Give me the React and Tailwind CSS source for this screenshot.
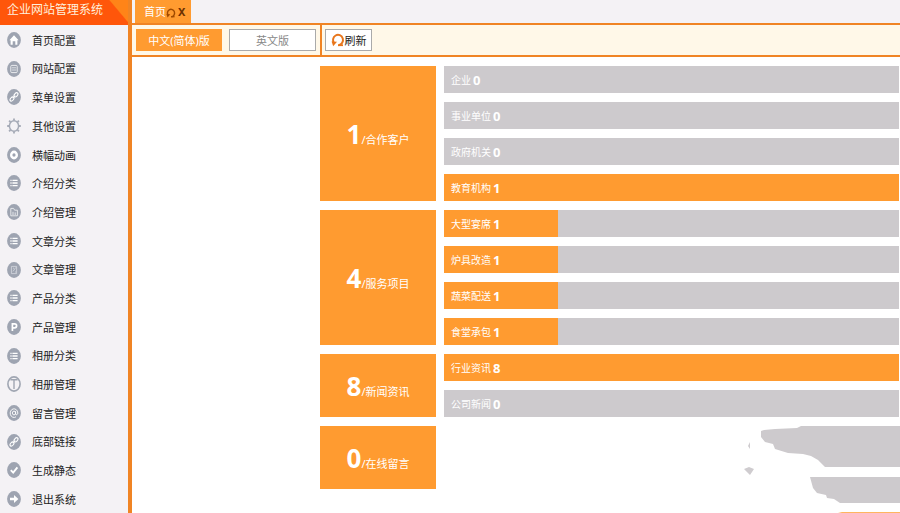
import React from "react";

const GLYPHS = {
  home: <path d="M2.4 8.2 7 3.2 11.6 8.2H10.4v4.6H8.3V9.2H5.7v3.6H3.6V8.2z" fill="#fff" />,
  site: (
    <g fill="none" stroke="#e9ebee">
      <rect x="3.8" y="4.4" width="6.4" height="7.2" rx="1" />
      <path d="M5 6.8h4M5 9h4" strokeWidth=".8" />
    </g>
  ),
  link: (
    <g fill="none" stroke="#fff" strokeWidth="1.1">
      <ellipse cx="5" cy="10" rx="1.5" ry="2.4" transform="rotate(42 5 10)" />
      <ellipse cx="9" cy="5.8" rx="1.5" ry="2.4" transform="rotate(42 9 5.8)" />
      <path d="M5.7 9.2 8.3 6.6" />
    </g>
  ),
  camera: (
    <g>
      <ellipse cx="7" cy="8" rx="4" ry="4.4" fill="#fff" />
      <ellipse cx="7" cy="8" rx="1.6" ry="1.7" fill="#9ea4b1" />
    </g>
  ),
  list: (
    <path
      d="M3.4 5.4h1.2M5.4 5.4h5.2M3.4 8h1.2M5.4 8h5.2M3.4 10.6h1.2M5.4 10.6h5.2"
      stroke="#fff"
      strokeWidth="1.3"
    />
  ),
  folder: (
    <path d="M3.8 11.8V4.4h2.8l1 1.8H10.4v5.6zM6 11V7.8M8.2 11V8.4" fill="none" stroke="#eceef1" strokeWidth=".9" />
  ),
  doc: (
    <path d="M4.4 4.4h5.2v7.2H4.4zM8.8 5.4 6 9.4M6 6.2h1M8 10h1" fill="none" stroke="#d5d9df" strokeWidth=".8" />
  ),
  product: (
    <path d="M5.4 12V4.8h2.2a1.9 1.9 0 0 1 0 4H5.4" fill="none" stroke="#fff" strokeWidth="1.7" />
  ),
  at: (
    <g fill="none" stroke="#fff" strokeWidth=".9">
      <ellipse cx="7" cy="8" rx="1.6" ry="1.9" />
      <path d="M8.6 6.2v2.6c0 1.5 2.2 1.2 2.2-.8A3.8 4.3 0 1 0 9 11.8" />
    </g>
  ),
  check: <path d="M3.8 8.2 6.2 10.6 10.4 5.4" fill="none" stroke="#fff" strokeWidth="1.9" />,
  exit: <path d="M3 6.7h4V4L11.4 8 7 12V9.3H3z" fill="#fff" />,
};

function MenuIcon({ name }) {
  return (
    <svg viewBox="0 0 14 16" className="h-4 w-3.5 shrink-0" aria-hidden="true">
      {name === "gear" && (
        <g fill="none" stroke="#a6abb7">
          <ellipse cx="7" cy="8" rx="4.6" ry="5.3" strokeWidth="1.5" />
          <path
            d="M7 .6v2M7 13.4v2M.2 8h2M11.8 8h2M2.1 2.6l1.4 1.5M11.9 2.6l-1.4 1.5M2.1 13.4l1.4-1.5M11.9 13.4l-1.4-1.5"
            strokeWidth="1.8"
          />
        </g>
      )}
      {name === "book" && (
        <g fill="none" stroke="#a0a6b2">
          <ellipse cx="7" cy="8" rx="6.1" ry="7.1" strokeWidth="1.6" />
          <path d="M7 3.4v9.6M3.4 3.8h7.2" strokeWidth="1.4" />
        </g>
      )}
      {GLYPHS[name] && <ellipse cx="7" cy="8" rx="6.9" ry="7.9" fill="#9ea4b1" />}
      {GLYPHS[name]}
    </svg>
  );
}

const MENU = [
  ["home", "首页配置"],
  ["site", "网站配置"],
  ["link", "菜单设置"],
  ["gear", "其他设置"],
  ["camera", "横幅动画"],
  ["list", "介绍分类"],
  ["folder", "介绍管理"],
  ["list", "文章分类"],
  ["doc", "文章管理"],
  ["list", "产品分类"],
  ["product", "产品管理"],
  ["list", "相册分类"],
  ["book", "相册管理"],
  ["at", "留言管理"],
  ["link", "底部链接"],
  ["check", "生成静态"],
  ["exit", "退出系统"],
];

const GROUPS = [
  {
    total: 1,
    name: "合作客户",
    bars: [
      ["企业", 0, 0],
      ["事业单位", 0, 0],
      ["政府机关", 0, 0],
      ["教育机构", 1, 100],
    ],
  },
  {
    total: 4,
    name: "服务项目",
    bars: [
      ["大型宴席", 1, 25],
      ["炉具改造", 1, 25],
      ["蔬菜配送", 1, 25],
      ["食堂承包", 1, 25],
    ],
  },
  {
    total: 8,
    name: "新闻资讯",
    bars: [
      ["行业资讯", 8, 100],
      ["公司新闻", 0, 0],
    ],
  },
];

function Refresh({ className }) {
  return (
    <svg viewBox="0 0 14 14" className={className} fill="none" stroke="currentColor" aria-hidden="true">
      <path d="M3.2 10.4A5 5.2 0 1 1 7.6 12.2" strokeWidth="2" />
      <path d="M.6 8.4 6 8.8 2.2 13.2z" fill="currentColor" stroke="none" />
      <path d="M7 12.2H12" strokeWidth="1.8" />
    </svg>
  );
}

function Total({ value, name }) {
  return (
    <div className="flex min-h-[63px] w-[116px] shrink-0 items-center justify-center bg-[#ff9b30] text-white">
      <div className="flex items-baseline">
        <strong className="text-[26px] leading-8 font-bold">{value}</strong>
        <span className="text-[11px]">/{name}</span>
      </div>
    </div>
  );
}

function Bar({ label, count, percent }) {
  return (
    <li className="grid h-[27px] items-center bg-[#cdcacd]">
      <div className="col-start-1 row-start-1 h-full bg-[#ff9b30]" style={{ width: `${percent}%` }} />
      <div className="col-start-1 row-start-1 flex items-center gap-0.5 px-[7px] text-white">
        <span className="text-[10px] leading-4">{label}</span>
        <strong className="text-[13px] leading-4 font-bold">{count}</strong>
      </div>
    </li>
  );
}

export default function App() {
  return (
    <div className="flex min-h-screen bg-white font-['Noto_Sans','Noto_Sans_CJK_SC',sans-serif] text-[11px] text-[#222]">
      <aside className="flex w-[132px] shrink-0 flex-col border-r-4 border-[#f08424] bg-[#f4f2f5]">
        <h1 className="flex h-[25px] items-start bg-linear-[50deg,#ff560a_0%,#ff560a_87%,#ff8418_88%] pl-[7px] text-[12px] leading-5 text-[#fff0dc]">
          企业网站管理系统
        </h1>
        <nav className="flex grow pt-px">
          <ul className="flex grow flex-col justify-between">
            {MENU.map(([icon, label]) => (
              <li key={label}>
                <a href="#" className="flex h-7 items-center gap-[11px] pl-[7px]">
                  <MenuIcon name={icon} />
                  <span className="pt-0.5">{label}</span>
                </a>
              </li>
            ))}
          </ul>
        </nav>
      </aside>

      <div className="flex min-w-0 grow flex-col">
        <header className="flex h-[25px] border-b-2 border-[#f08424] bg-[#f4f2f5] pl-[3px]">
          <div className="flex w-[56px] items-center bg-[#ff9b30] pt-0.5 pl-[9px] text-white">
            <span>首页</span>
            <button type="button" aria-label="刷新标签" className="text-[#a04a00]">
              <Refresh className="size-2.5" />
            </button>
            <button type="button" className="pl-0.5 font-bold text-[#6b3000]">
              X
            </button>
          </div>
        </header>

        <div className="flex h-8 items-stretch border-b-2 border-[#f08424] bg-[#fff8e8]">
          <div className="flex w-[190px] shrink-0 items-center gap-[7px] border-r-2 border-[#f08424] pl-1">
            <button type="button" className="h-[22px] w-[86px] bg-[#ff9b30] pt-0.5 text-white">
              中文(简体)版
            </button>
            <button type="button" className="h-[22px] w-[87px] border border-[#aaa] bg-white pt-0.5 text-[#888]">
              英文版
            </button>
          </div>
          <div className="flex items-center pl-[3px]">
            <button
              type="button"
              className="flex h-[22px] w-[47px] items-center justify-center border border-[#aaa] bg-white"
            >
              <Refresh className="size-3.5 text-[#e8761c]" />
              <span className="pt-0.5">刷新</span>
            </button>
          </div>
        </div>

        <main className="flex flex-col gap-[9px] pt-[9px] pr-px pl-[188px]">
          {GROUPS.map((group) => (
            <section key={group.name} className="flex gap-2">
              <Total value={group.total} name={group.name} />
              <ul className="flex grow flex-col gap-[9px]">
                {group.bars.map(([label, count, percent]) => (
                  <Bar key={label} label={label} count={count} percent={percent} />
                ))}
              </ul>
            </section>
          ))}
          <section className="-mr-px flex items-start justify-between">
            <Total value={0} name="在线留言" />
            <svg viewBox="740 426 160 87" className="h-[87px] w-40" aria-hidden="true">
              <path
                d="M761 431 764 430 775 429 797 428 801 426H900V467H825L818 460 811 456 803 454 788 453 775 449 773 444 765 442 761 437z"
                fill="#cdcacd"
              />
              <path d="M810 477H900V503H840L834 499 827 498 826 495 817 493 813 488z" fill="#cdcacd" />
              <path d="M842 512H900V513H838z" fill="#ffb55f" />
              <path d="M750 442V449L748 446zM744 469 749 467 754 469 750 475z" fill="#cfcccf" />
            </svg>
          </section>
        </main>
      </div>
    </div>
  );
}
